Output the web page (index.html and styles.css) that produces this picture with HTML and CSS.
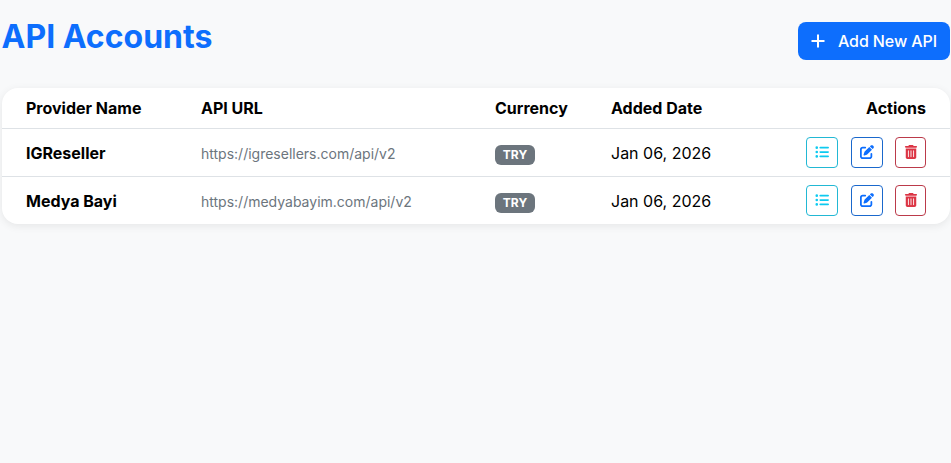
FILE: index.html
```html
<!DOCTYPE html>
<html>
<head>
	<meta charset="utf-8">
	<title>API Accounts</title>
	<link rel="stylesheet" href="styles.css">
</head>
<body>
	<svg class="defs" width="0" height="0">
		<symbol id="i-list" viewBox="0 0 512 512"><path d="M64 144a48 48 0 1 0 0-96 48 48 0 1 0 0 96zM192 64c-17.7 0-32 14.3-32 32s14.3 32 32 32H480c17.7 0 32-14.3 32-32s-14.3-32-32-32H192zm0 160c-17.7 0-32 14.3-32 32s14.3 32 32 32H480c17.7 0 32-14.3 32-32s-14.3-32-32-32H192zm0 160c-17.7 0-32 14.3-32 32s14.3 32 32 32H480c17.7 0 32-14.3 32-32s-14.3-32-32-32H192zM64 464a48 48 0 1 0 0-96 48 48 0 1 0 0 96zm48-208a48 48 0 1 0 -96 0 48 48 0 1 0 96 0z"/></symbol>
		<symbol id="i-edit" viewBox="0 0 512 512"><path d="M471.6 21.7c-21.9-21.9-57.3-21.9-79.2 0L362.3 51.7l97.9 97.9 30.1-30.1c21.9-21.9 21.9-57.3 0-79.2L471.6 21.7zm-299.2 220c-6.1 6.1-10.8 13.6-13.5 21.9l-29.6 88.8c-2.9 8.6-.6 18.1 5.8 24.6s15.9 8.7 24.6 5.8l88.8-29.6c8.2-2.7 15.7-7.4 21.9-13.5L437.7 172.3 339.7 74.3 172.4 241.7zM96 64C43 64 0 107 0 160V416c0 53 43 96 96 96H352c53 0 96-43 96-96V320c0-17.7-14.3-32-32-32s-32 14.3-32 32v96c0 17.7-14.3 32-32 32H96c-17.7 0-32-14.3-32-32V160c0-17.7 14.3-32 32-32h96c17.7 0 32-14.3 32-32s-14.3-32-32-32H96z"/></symbol>
		<symbol id="i-trash" viewBox="0 0 448 512"><path d="M135.2 17.7C140.6 6.8 151.7 0 163.8 0H284.2c12.1 0 23.2 6.8 28.6 17.7L320 32h96c17.7 0 32 14.3 32 32s-14.3 32-32 32H32C14.3 96 0 81.7 0 64S14.3 32 32 32h96l7.2-14.3zM32 128H416V448c0 35.3-28.7 64-64 64H96c-35.3 0-64-28.7-64-64V128zm96 64c-8.8 0-16 7.2-16 16V432c0 8.8 7.2 16 16 16s16-7.2 16-16V208c0-8.8-7.2-16-16-16zm96 0c-8.8 0-16 7.2-16 16V432c0 8.8 7.2 16 16 16s16-7.2 16-16V208c0-8.8-7.2-16-16-16zm96 0c-8.8 0-16 7.2-16 16V432c0 8.8 7.2 16 16 16s16-7.2 16-16V208c0-8.8-7.2-16-16-16z"/></symbol>
	</svg>
	<div class="page">
		<div class="top">
			<h1>API Accounts</h1>
			<a href="javascript:;" class="add-btn">
				<svg class="plus" viewBox="0 0 16 16"><path d="M8 1.5v13M1.5 8h13"/></svg>
				Add New API
			</a>
		</div>
		<div class="card">
			<table>
				<thead>
					<tr>
						<th class="c-name">Provider Name</th>
						<th class="c-url">API URL</th>
						<th class="c-cur">Currency</th>
						<th class="c-date">Added Date</th>
						<th class="c-act">Actions</th>
					</tr>
				</thead>
				<tbody>
					<tr>
						<td class="name">IGReseller</td>
						<td class="url">https://igresellers.com/api/v2</td>
						<td><span class="badge">TRY</span></td>
						<td>Jan 06, 2026</td>
						<td>
							<div class="actions">
								<a href="javascript:;" class="act info"><svg><use href="#i-list"/></svg></a>
								<a href="javascript:;" class="act primary"><svg><use href="#i-edit"/></svg></a>
								<a href="javascript:;" class="act danger"><svg><use href="#i-trash"/></svg></a>
							</div>
						</td>
					</tr>
					<tr>
						<td class="name">Medya Bayi</td>
						<td class="url">https://medyabayim.com/api/v2</td>
						<td><span class="badge">TRY</span></td>
						<td>Jan 06, 2026</td>
						<td>
							<div class="actions">
								<a href="javascript:;" class="act info"><svg><use href="#i-list"/></svg></a>
								<a href="javascript:;" class="act primary"><svg><use href="#i-edit"/></svg></a>
								<a href="javascript:;" class="act danger"><svg><use href="#i-trash"/></svg></a>
							</div>
						</td>
					</tr>
				</tbody>
			</table>
		</div>
	</div>
</body>
</html>
```
FILE: styles.css
```css
* { box-sizing: border-box; }
html, body { height: 100%; }
body { margin: 0; background: #f8f9fa; color: #000; font-family: Inter, "Liberation Sans", sans-serif; font-size: 16px; overflow: hidden; }
.defs { display: block; height: 0; }
.page { padding: 0 1px 0 2px; }

.top { display: flex; justify-content: space-between; align-items: flex-start; padding-top: 18px; height: 88px; }
.top h1 { margin: 0 0 0 -.5px; font-size: 32px; line-height: 38px; font-weight: 700; color: #0d6efd; }
.add-btn { display: flex; align-items: center; gap: 12px; height: 38px; margin-top: 4px; padding: 0 12px; background: #0d6efd; color: #fff; border-radius: 8px; font-size: 16px; font-weight: 500; letter-spacing: -.1px; text-decoration: none; width: 152px; white-space: nowrap; }
.plus { width: 16px; height: 16px; fill: none; stroke: #fff; stroke-width: 2; flex: none; }

.card { background: #fff; border-radius: 16px; overflow: hidden; box-shadow: 0 2px 8px rgba(0,0,0,.08); }
table { width: 100%; border-collapse: collapse; table-layout: fixed; }
th { height: 40px; padding: 1px 0 0 24px; text-align: left; font-size: 16px; font-weight: 700; border-bottom: 1px solid #dee2e6; }
td { height: 48px; padding: 2px 0 0 24px; font-size: 16px; border-bottom: 1px solid #dee2e6; }
tbody tr:last-child td { border-bottom: 0; }
.c-name { width: 175px; }
.c-url { width: 294px; }
.c-cur { width: 116px; }
.c-date { width: 165px; }
th.c-act { text-align: right; padding-right: 24px; }
.name { font-weight: 700; }
.url { font-size: 14px; color: #6c757d; }
.badge { display: block; width: 40px; height: 20px; line-height: 20px; margin-top: 3px; text-align: center; background: #6c757d; color: #fff; border-radius: 6px; font-size: 12px; font-weight: 700; }

.actions { display: flex; justify-content: flex-end; gap: 13px; padding-right: 24px; margin-top: -2px; }
.act { display: flex; align-items: center; justify-content: center; width: 32px; height: 31px; border: 1px solid; border-radius: 4px; }
.act svg { width: 14px; height: 14px; fill: currentColor; }
.act.info { color: #0dcaf0; border-color: #22b8d4; }
.act.primary { color: #0d6efd; border-color: #1a68cc; }
.act.danger { color: #dc3545; border-color: #bb3a4a; width: 31px; margin-left: -1px; }
```
